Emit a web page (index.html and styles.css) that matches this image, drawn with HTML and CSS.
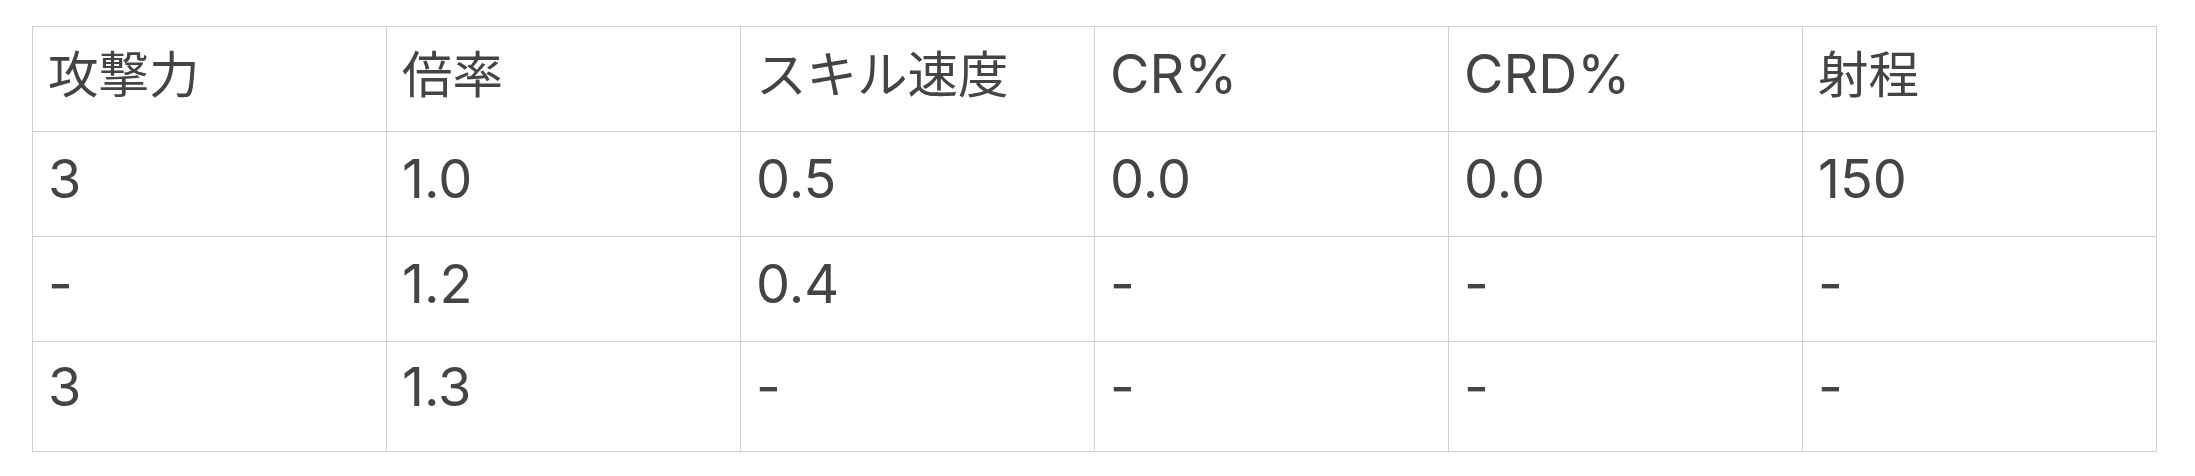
FILE: index.html
```html
<!DOCTYPE html>
<html lang="ja">
<head>
<meta charset="utf-8">
<link rel="stylesheet" href="styles.css">
</head>
<body>
<div class="wrap">
<table class="stats">
<thead>
<tr><th><span class="ja">攻撃力</span></th><th><span class="ja">倍率</span></th><th><span class="ja">スキル速度</span></th><th>CR%</th><th>CRD%</th><th><span class="ja">射程</span></th></tr>
</thead>
<tbody>
<tr><td>3</td><td>1.0</td><td>0.5</td><td>0.0</td><td>0.0</td><td>150</td></tr>
<tr><td>-</td><td>1.2</td><td>0.4</td><td>-</td><td>-</td><td>-</td></tr>
<tr class="last"><td>3</td><td>1.3</td><td>-</td><td>-</td><td>-</td><td>-</td></tr>
</tbody>
</table>
</div>
</body>
</html>
```

FILE: styles.css
```css
html, body {
  margin: 0;
  padding: 0;
  background: #ffffff;
}
.wrap {
  padding: 26px 0 0 32px;
}
.stats {
  border-collapse: collapse;
  table-layout: fixed;
  width: 2125px;
  font-family: "Inter", "Noto Sans CJK JP", sans-serif;
  font-size: 54px;
  color: #444444;
}
.stats th,
.stats td {
  border: 1px solid #d2d2d2;
  height: 105px;
  box-sizing: border-box;
  padding: 0 15px 9px;
  text-align: left;
  vertical-align: middle;
  font-weight: 400;
  line-height: 1.2;
}
.stats .ja {
  font-size: 50.5px;
}
.stats tr.last td {
  height: 110px;
  padding-bottom: 19px;
}
```
